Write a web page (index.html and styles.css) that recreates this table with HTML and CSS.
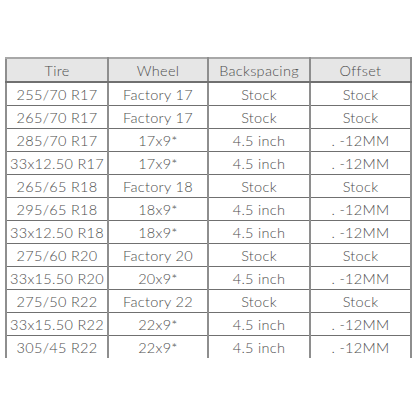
FILE: index.html
```html
<!DOCTYPE html>
<html>
<head>
<meta charset="utf-8">
<link rel="stylesheet" href="styles.css">
</head>
<body>
<table class="fit">
  <colgroup>
    <col class="c1"><col class="c2"><col class="c3"><col class="c4">
  </colgroup>
  <thead>
    <tr><th>Tire</th><th>Wheel</th><th>Backspacing</th><th>Offset</th></tr>
  </thead>
  <tbody>
    <tr><td>255/70 R17</td><td>Factory 17</td><td>Stock</td><td>Stock</td></tr>
    <tr><td>265/70 R17</td><td>Factory 17</td><td>Stock</td><td>Stock</td></tr>
    <tr><td>285/70 R17</td><td>17x9*</td><td>4.5 inch</td><td>. -12MM</td></tr>
    <tr><td>33x12.50 R17</td><td>17x9*</td><td>4.5 inch</td><td>. -12MM</td></tr>
    <tr><td>265/65 R18</td><td>Factory 18</td><td>Stock</td><td>Stock</td></tr>
    <tr><td>295/65 R18</td><td>18x9*</td><td>4.5 inch</td><td>. -12MM</td></tr>
    <tr><td>33x12.50 R18</td><td>18x9*</td><td>4.5 inch</td><td>. -12MM</td></tr>
    <tr><td>275/60 R20</td><td>Factory 20</td><td>Stock</td><td>Stock</td></tr>
    <tr><td>33x15.50 R20</td><td>20x9*</td><td>4.5 inch</td><td>. -12MM</td></tr>
    <tr><td>275/50 R22</td><td>Factory 22</td><td>Stock</td><td>Stock</td></tr>
    <tr><td>33x15.50 R22</td><td>22x9*</td><td>4.5 inch</td><td>. -12MM</td></tr>
    <tr><td>305/45 R22</td><td>22x9*</td><td>4.5 inch</td><td>. -12MM</td></tr>
  </tbody>
</table>
</body>
</html>
```
FILE: styles.css
```css
html, body {
  margin: 0;
  padding: 0;
  background: #ffffff;
}
body {
  padding: 57px 0 0 5px;
  font-family: "Lato", "Liberation Sans", sans-serif;
  color: #4e4e4e;
}
.fit {
  border-collapse: collapse;
  table-layout: fixed;
  width: 405px;
  font-size: 14.5px;
  letter-spacing: 0.3px;
}
.c1 { width: 102px; }
.c2 { width: 100px; }
.c3 { width: 102px; }
.c4 { width: 101px; }
.fit th, .fit td {
  text-align: center;
  padding: 0;
  border-left: 2px solid #8e8e8e;
  border-right: 2px solid #8e8e8e;
  border-bottom: 1px solid #707070;
  white-space: nowrap;
  font-weight: 300;
}
.fit th {
  height: 22px;
  background: #e6e6e6;
  border-top: 2px solid #a8a8a8;
  border-bottom: 2px solid #707070;
  color: #4e4e4e;
}
.fit td {
  height: 22px;
}
.fit tbody tr:last-child td {
  border-bottom: none;
}
```
